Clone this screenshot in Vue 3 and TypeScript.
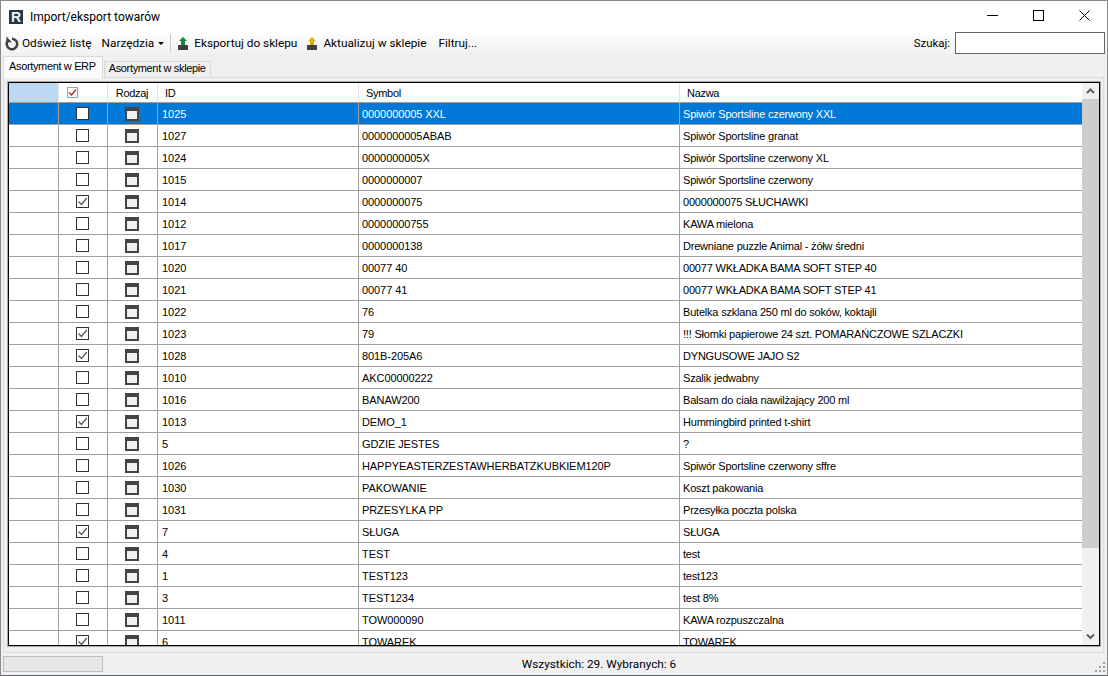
<script setup lang="ts">
interface Product {
  id: string
  symbol: string
  name: string
  checked?: boolean
}

const products: Product[] = [
  { id: '1025', symbol: '0000000005 XXL', name: 'Spiwór Sportsline czerwony XXL' },
  { id: '1027', symbol: '0000000005ABAB', name: 'Spiwór Sportsline granat' },
  { id: '1024', symbol: '0000000005X', name: 'Spiwór Sportsline czerwony XL' },
  { id: '1015', symbol: '0000000007', name: 'Spiwór Sportsline czerwony' },
  { id: '1014', symbol: '0000000075', name: '0000000075 SŁUCHAWKI', checked: true },
  { id: '1012', symbol: '00000000755', name: 'KAWA mielona' },
  { id: '1017', symbol: '0000000138', name: 'Drewniane puzzle Animal - żółw średni' },
  { id: '1020', symbol: '00077 40', name: '00077 WKŁADKA BAMA SOFT STEP 40' },
  { id: '1021', symbol: '00077 41', name: '00077 WKŁADKA BAMA SOFT STEP 41' },
  { id: '1022', symbol: '76', name: 'Butelka szklana 250 ml do soków, koktajli' },
  { id: '1023', symbol: '79', name: '!!! Słomki papierowe 24 szt. POMARAŃCZOWE SZLACZKI', checked: true },
  { id: '1028', symbol: '801B-205A6', name: 'DYNGUSOWE JAJO S2', checked: true },
  { id: '1010', symbol: 'AKC00000222', name: 'Szalik jedwabny' },
  { id: '1016', symbol: 'BANAW200', name: 'Balsam do ciała nawilżający 200 ml' },
  { id: '1013', symbol: 'DEMO_1', name: 'Hummingbird printed t-shirt', checked: true },
  { id: '5', symbol: 'GDZIE JESTES', name: '?' },
  { id: '1026', symbol: 'HAPPYEASTERZESTAWHERBATZKUBKIEM120P', name: 'Spiwór Sportsline czerwony sffre' },
  { id: '1030', symbol: 'PAKOWANIE', name: 'Koszt pakowania' },
  { id: '1031', symbol: 'PRZESYLKA PP', name: 'Przesyłka poczta polska' },
  { id: '7', symbol: 'SŁUGA', name: 'SŁUGA', checked: true },
  { id: '4', symbol: 'TEST', name: 'test' },
  { id: '1', symbol: 'TEST123', name: 'test123' },
  { id: '3', symbol: 'TEST1234', name: 'test 8%' },
  { id: '1011', symbol: 'TOW000090', name: 'KAWA rozpuszczalna' },
  { id: '6', symbol: 'TOWAREK', name: 'TOWAREK', checked: true },
]
</script>

<template>
  <div class="window">
    <header class="titlebar">
      <span class="logo">R</span>
      <span class="title">Import/eksport towarów</span>
      <div class="win-buttons">
        <svg width="11" height="11" viewBox="0 0 11 11"><path d="M0 5.5h11" stroke="#000" fill="none" /></svg>
        <svg width="11" height="11" viewBox="0 0 11 11"><rect x="0.5" y="0.5" width="10" height="10" stroke="#000" fill="none" /></svg>
        <svg width="11" height="11" viewBox="0 0 11 11"><path d="M0.5 0.5l10 10M10.5 0.5l-10 10" stroke="#000" fill="none" /></svg>
      </div>
    </header>

    <div class="toolbar">
      <button class="tool tool--refresh">
        <svg width="14" height="15" viewBox="0 0 14 15">
          <path d="M3.2 4.4a5.2 5.2 0 1 0 3.8-1.6" stroke="#404040" stroke-width="2.5" fill="none" />
          <path d="M1.4 0.6v5.6h5.6z" fill="#404040" />
        </svg>
        Odśwież listę
      </button>
      <button class="tool tool--menu">
        Narzędzia
        <span class="caret"></span>
      </button>
      <span class="sep"></span>
      <button class="tool tool--export">
        <svg width="13" height="13" viewBox="0 0 13 13">
          <path d="M6 0L10 4H8V8H4V4H2z" fill="#0b8a3c" />
          <rect x="1" y="8" width="10" height="5" fill="#404040" />
        </svg>
        Eksportuj do sklepu
      </button>
      <button class="tool tool--update">
        <svg width="13" height="13" viewBox="0 0 13 13">
          <path d="M6 0L10 4H8V8H4V4H2z" fill="#e0b000" />
          <rect x="1" y="8" width="10" height="5" fill="#404040" />
        </svg>
        Aktualizuj w sklepie
      </button>
      <button class="tool tool--filter">Filtruj...</button>
      <label class="search">
        Szukaj:
        <input type="text" />
      </label>
    </div>

    <nav class="tabs">
      <span class="tab tab--active">Asortyment w ERP</span>
      <span class="tab">Asortyment w sklepie</span>
    </nav>

    <section class="page">
      <div class="grid">
        <div class="table">
          <div class="row row--head">
            <div class="cell cell--corner"></div>
            <div class="cell cell--head-check">
              <span class="head-check">
                <svg width="9" height="9" viewBox="0 0 9 9"><path d="M1 4.5l2.5 2.5L8 1.5" stroke="#a02818" stroke-width="1.2" fill="none" /></svg>
              </span>
            </div>
            <div class="cell cell--center">Rodzaj</div>
            <div class="cell cell--id-head">ID</div>
            <div class="cell cell--id-head">Symbol</div>
            <div class="cell cell--id-head">Nazwa</div>
          </div>
          <div
            v-for="(item, index) in products"
            :key="item.id"
            class="row"
            :class="{ 'row--selected': index === 0 }"
          >
            <div class="cell"></div>
            <div class="cell cell--center">
              <span class="check">
                <svg v-if="item.checked" width="11" height="11" viewBox="0 0 11 11"><path d="M1.5 5.5l3 3L9.8 2" stroke="#555" stroke-width="1.2" fill="none" /></svg>
              </span>
            </div>
            <div class="cell cell--center"><span class="kind"></span></div>
            <div class="cell">{{ item.id }}</div>
            <div class="cell cell--symbol">{{ item.symbol }}</div>
            <div class="cell cell--name">{{ item.name }}</div>
          </div>
        </div>
        <div class="scrollbar">
          <svg class="arrow" width="17" height="16" viewBox="0 0 17 16"><path d="M5 10l3.5-3.5L12 10" stroke="#606060" stroke-width="2" fill="none" /></svg>
          <div class="track"><div class="thumb"></div></div>
          <svg class="arrow" width="17" height="17" viewBox="0 0 17 17"><path d="M5 6.5l3.5 3.5 3.5-3.5" stroke="#606060" stroke-width="2" fill="none" /></svg>
        </div>
      </div>
    </section>

    <footer class="statusbar">
      <span class="progress"></span>
      <span class="status-text">Wszystkich: 29. Wybranych: 6</span>
      <svg class="grip" width="12" height="12" viewBox="0 0 12 12" fill="#a0a0a0">
        <rect x="8" y="0" width="2" height="2" /><rect x="4" y="4" width="2" height="2" /><rect x="8" y="4" width="2" height="2" />
        <rect x="0" y="8" width="2" height="2" /><rect x="4" y="8" width="2" height="2" /><rect x="8" y="8" width="2" height="2" />
      </svg>
    </footer>
  </div>
</template>

<style>
html,
body {
  margin: 0;
  overflow: hidden;
}
</style>

<style scoped>
.window {
  width: 1108px;
  height: 676px;
  box-sizing: border-box;
  display: flex;
  flex-direction: column;
  background: #f0f0f0;
  border: 1px solid #8a8a8a;
  border-bottom: 1px solid #5a6570;
  font-family: Roboto, "Liberation Sans", sans-serif;
  font-size: 11.8px;
  color: #000;
  overflow: hidden;
}

.titlebar {
  height: 29px;
  flex: none;
  display: flex;
  align-items: center;
  background: #fff;
}

.logo {
  width: 14px;
  height: 14px;
  margin: 2px 7px 0 8px;
  display: flex;
  align-items: center;
  justify-content: center;
  background: #22374a;
  color: #f2f2f2;
  font-family: "Liberation Sans", sans-serif;
  font-size: 14px;
  font-weight: 700;
  line-height: 14px;
}

.title {
  margin-top: 2px;
  font-size: 12px;
}

.win-buttons {
  margin-left: auto;
  margin-right: 17px;
  margin-bottom: 1px;
  display: flex;
  gap: 35px;
}

.toolbar {
  height: 26px;
  flex: none;
  display: flex;
  align-items: center;
  background: linear-gradient(#fff, #f0f0f0);
}

.tool {
  padding: 0;
  display: flex;
  align-items: center;
  gap: 4px;
  border: none;
  background: none;
  font: inherit;
  color: inherit;
  white-space: nowrap;
}

.tool--refresh {
  margin-left: 4px;
  gap: 3px;
}

.tool--menu {
  margin-left: 10px;
  gap: 4px;
}

.caret {
  width: 0;
  height: 0;
  border: 3px solid transparent;
  border-top: 3px solid #000;
  border-bottom: none;
}

.sep {
  width: 1px;
  height: 18px;
  margin: 0 6px;
  background: #c8c8c8;
}

.tool--update {
  margin-left: 9px;
}

.tool--filter {
  margin-left: 12px;
}

.search {
  margin-left: auto;
  margin-right: 2px;
  display: flex;
  align-items: center;
  gap: 5px;
  font-size: 11.4px;
}

.search input {
  width: 150px;
  height: 22px;
  padding: 0;
  box-sizing: border-box;
  border: 1px solid #646464;
  background: #fff;
}

.tabs {
  height: 21px;
  flex: none;
  padding-left: 2px;
  display: flex;
  align-items: flex-end;
  font-family: "Liberation Sans", sans-serif;
  font-size: 11px;
  letter-spacing: -0.35px;
}

.tab {
  height: 16px;
  padding: 0 4px 3px;
  margin-left: 1px;
  box-sizing: border-box;
  display: flex;
  align-items: center;
  border: 1px solid #d9d9d9;
  border-bottom: none;
  background: #f0f0f0;
}

.tab--active {
  height: 22px;
  padding: 0 6px 3px 5px;
  margin-left: 0;
  margin-bottom: -1px;
  background: #fbfbfb;
  position: relative;
  z-index: 1;
}

.page {
  flex: 1;
  min-height: 0;
  margin: 0 3px 0 2px;
  padding: 4px 3px 6px 4px;
  border: 1px solid #dcdcdc;
  display: flex;
}

.grid {
  flex: 1;
  min-width: 0;
  display: flex;
  border: 1px solid #000;
  box-shadow: 0 0 0 1px rgba(0, 0, 0, 0.3);
  background: #fff;
  font-family: "Liberation Sans", sans-serif;
  font-size: 11px;
}

.table {
  flex: 1;
  min-width: 0;
  overflow: hidden;
}

.row {
  height: 22px;
  box-sizing: border-box;
  display: grid;
  grid-template-columns: 50px 49px 50px 201px 321px 1fr;
  border-bottom: 1px solid #a0a0a0;
}

.row--head {
  height: 20px;
  letter-spacing: -0.3px;
}

.row--head .cell {
  border-right-color: #e4e4e4;
}

.row--selected {
  background: #0078d7;
  color: #fff;
}

.cell {
  min-width: 0;
  padding-left: 4px;
  display: flex;
  align-items: center;
  box-sizing: border-box;
  border-right: 1px solid #a0a0a0;
  white-space: nowrap;
  overflow: hidden;
}

.cell:last-child {
  border-right: none;
}

.cell--corner {
  background: #bcd9f1;
}

.cell--center {
  padding: 0 1px 0 0;
  justify-content: center;
}

.cell--head-check {
  padding-left: 8px;
}

.cell--id-head {
  padding-left: 7px;
}

.cell--symbol {
  padding-left: 3px;
  letter-spacing: -0.08px;
}

.cell--name {
  padding-left: 3px;
  letter-spacing: -0.2px;
}

.check {
  width: 13px;
  height: 13px;
  box-sizing: border-box;
  display: flex;
  align-items: center;
  justify-content: center;
  border: 1px solid #333;
  background: #fff;
}

.head-check {
  width: 11px;
  height: 11px;
  box-sizing: border-box;
  display: flex;
  align-items: center;
  justify-content: center;
  border: 1px solid #a0a0a0;
  background: #fff;
}

.kind {
  width: 14px;
  height: 14px;
  box-sizing: border-box;
  border: 2px solid #444;
  border-top-width: 4px;
  background: #f0f0f0;
}

.scrollbar {
  width: 17px;
  flex: none;
  display: flex;
  flex-direction: column;
  background: #f0f0f0;
}

.arrow {
  flex: none;
}

.track {
  flex: 1;
  min-height: 0;
}

.thumb {
  height: 449px;
  background: #cdcdcd;
}

.statusbar {
  height: 22px;
  flex: none;
  display: flex;
  align-items: center;
  position: relative;
  background: #f0f0f0;
}

.progress {
  width: 100px;
  height: 16px;
  margin-left: 2px;
  box-sizing: border-box;
  border: 1px solid #bcbcbc;
  background: #e6e6e6;
}

.status-text {
  flex: 1;
  text-align: center;
  margin-right: 12px;
}

.grip {
  position: absolute;
  right: 0;
  bottom: 1px;
}
</style>
